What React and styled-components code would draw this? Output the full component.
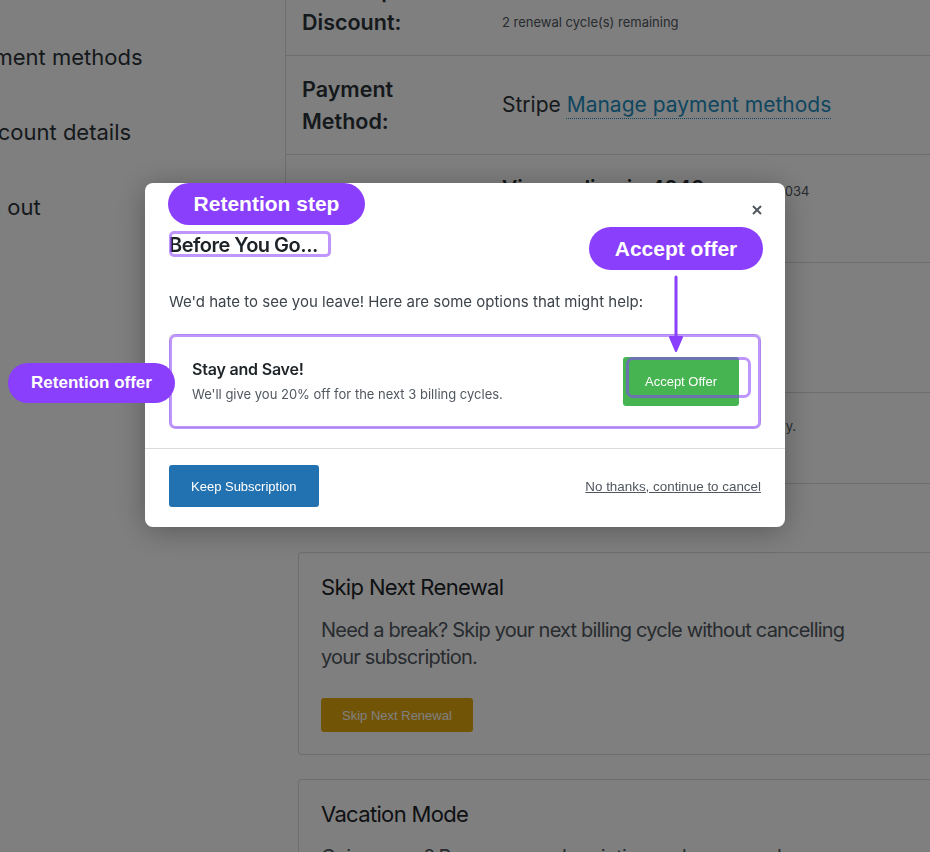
import React from 'react'
import styled, { createGlobalStyle } from 'styled-components'
import { X } from 'lucide-react'

const GlobalStyle = createGlobalStyle`
  html, body {
    margin: 0;
    padding: 0;
  }
  body {
    width: 930px;
    height: 852px;
    overflow: hidden;
    background: #fff;
    font-family: Inter, "Noto Sans", sans-serif;
    color: #2c3338;
  }
  * { box-sizing: border-box; }
`

const App = () => {
  return (
    <>
      <GlobalStyle />
      <Page>
        <Sidebar>
          <NavLink $hidden={45}>Payment methods</NavLink>
          <NavLink $hidden={30}>Account details</NavLink>
          <NavLink $hidden={38}>Log out</NavLink>
        </Sidebar>

        <Main>
          <Details>
            <Row $h={98}>
              <Label>Subscription<br />Discount:</Label>
              <Small $offset={32}>2 renewal cycle(s) remaining</Small>
            </Row>
            <Row $h={99}>
              <Label>Payment<br />Method:</Label>
              <Value>
                Stripe <Link>Manage payment methods</Link>
              </Value>
            </Row>
            <Row $h={108} $top>
              <Label />
              <Value>
                <strong>Visa ending in 4242</strong> <Small>Expires 12/2034</Small>
                <br />
                <Link>Update card</Link>
              </Value>
            </Row>
            <Row $h={130}>
              <Label>Next<br />Payment:</Label>
              <Value>June 12, 2025</Value>
            </Row>
            <Row $h={91}>
              <Label>Renewal:</Label>
              <Small $tight>
                Your next payment will be charged automatically.
                <br />
                Cancel any time.
              </Small>
            </Row>
          </Details>

          <Card>
            <CardTitle>Skip Next Renewal</CardTitle>
            <CardText>Need a break? Skip your next billing cycle without cancelling your subscription.</CardText>
            <SkipButton>Skip Next Renewal</SkipButton>
          </Card>
          <Card $gap={24}>
            <CardTitle>Vacation Mode</CardTitle>
            <CardText>Going away? Pause your subscription and resume when you are back.</CardText>
          </Card>
        </Main>
      </Page>

      <Overlay>
        <Modal>
          <CloseButton aria-label="Close">
            <X size={14} strokeWidth={3.2} />
          </CloseButton>
          <ModalHeader>
            <ModalTitle>Before You Go...</ModalTitle>
          </ModalHeader>
          <ModalBody>
            <Intro>We'd hate to see you leave! Here are some options that might help:</Intro>
            <Offer>
              <div>
                <OfferTitle>Stay and Save!</OfferTitle>
                <OfferText>We'll give you 20% off for the next 3 billing cycles.</OfferText>
              </div>
              <AcceptButton>Accept Offer</AcceptButton>
            </Offer>
          </ModalBody>
          <ModalFooter>
            <KeepButton>Keep Subscription</KeepButton>
            <CancelLink>No thanks, continue to cancel</CancelLink>
          </ModalFooter>
        </Modal>
      </Overlay>

      <Annotations>
        <Ring $x={169} $y={231} $w={162} $h={26} $r={5} />
        <Ring $x={169} $y={334} $w={592} $h={95} $r={7} />
        <Ring $x={626} $y={357} $w={125} $h={41} $r={7} />
        <Arrow width="16" height="82" viewBox="0 0 16 82" $x={668} $y={274}>
          <line x1="8" y1="3" x2="8" y2="66" stroke="#8a3ffc" strokeWidth="3" strokeLinecap="round" />
          <path d="M2 63 L14 63 L8 77 Z" fill="#8a3ffc" stroke="#8a3ffc" strokeWidth="2" strokeLinejoin="round" />
        </Arrow>
        <Pill $x={168} $y={183} $w={197} $h={42} $size={21}>Retention step</Pill>
        <Pill $x={589} $y={227} $w={174} $h={43} $size={21}>Accept offer</Pill>
        <Pill $x={8} $y={363} $w={167} $h={40} $size={17}>Retention offer</Pill>
      </Annotations>
    </>
  )
}

export default App

const Page = styled.div`
  display: flex;
  width: 1240px;
  height: 852px;
`

const Sidebar = styled.nav`
  width: 285px;
  flex-shrink: 0;
  display: flex;
  flex-direction: column;
  gap: 49px;
  padding-top: 44px;
  overflow: hidden;
`

const NavLink = styled.a`
  display: block;
  margin-left: ${p => -p.$hidden}px;
  font-size: 22px;
  line-height: 26px;
  white-space: nowrap;
  color: #2c3338;
`

const Main = styled.main`
  flex: 1;
  display: flex;
  flex-direction: column;
`

const Details = styled.div`
  margin-top: -44px;
  border: 1px solid #dcdcde;
  border-right: none;
`

const Row = styled.div`
  display: grid;
  grid-template-columns: 200px 1fr;
  align-items: ${p => (p.$top ? 'start' : 'center')};
  min-height: ${p => p.$h}px;
  padding: ${p => (p.$top ? '18px 16px 0' : '0 16px')};

  & + & {
    border-top: 1px solid #dcdcde;
  }
`

const Label = styled.div`
  font-size: 21.5px;
  line-height: 32px;
  font-weight: 600;
  color: #2c3338;
`

const Value = styled.div`
  font-size: 21px;
  line-height: 32px;
  color: #2c3338;

  strong {
    font-weight: 600;
  }
`

const Small = styled.span`
  margin-top: ${p => p.$offset || 0}px;
  font-size: 13px;
  line-height: 24px;
  letter-spacing: ${p => (p.$tight ? '-0.15px' : 'normal')};
  color: #50575e;
`

const Link = styled.a`
  color: #1e8cbe;
  text-decoration: underline dotted;
  text-underline-offset: 6px;
  text-decoration-thickness: 1px;
`

const Card = styled.section`
  margin: ${p => p.$gap || 68}px 0 0 13px;
  padding: 22px;
  border: 1px solid #dcdcde;
  border-right: none;
  border-radius: 4px 0 0 4px;
  background: #fff;
`

const CardTitle = styled.h3`
  margin: 0 0 18px;
  font-size: 22px;
  line-height: 24px;
  font-weight: 400;
  letter-spacing: -0.03em;
  color: #1d2327;
`

const CardText = styled.p`
  margin: 0 0 27px;
  max-width: 550px;
  font-size: 20px;
  line-height: 27px;
  letter-spacing: -0.04em;
  color: #50575e;
`

const SkipButton = styled.button`
  height: 34px;
  padding: 0 21px;
  border: none;
  border-radius: 3px;
  background: #e5a90f;
  color: #fff;
  font-family: "Liberation Sans", Arial, sans-serif;
  font-size: 13px;
`

const Overlay = styled.div`
  position: fixed;
  inset: 0;
  display: flex;
  justify-content: center;
  align-items: flex-start;
  padding-top: 183px;
  background: rgba(0, 0, 0, 0.5);
`

const Modal = styled.div`
  position: relative;
  width: 640px;
  background: #fff;
  border-radius: 8px;
  box-shadow: 0 4px 30px rgba(0, 0, 0, 0.3);
`

const CloseButton = styled.button`
  position: absolute;
  top: 20px;
  right: 21px;
  display: flex;
  padding: 0;
  border: none;
  background: none;
  color: #50575e;
`

const ModalHeader = styled.div`
  padding: 50px 24px 0;
`

const ModalTitle = styled.h2`
  margin: 0;
  font-size: 20px;
  line-height: 24px;
  font-weight: 600;
  letter-spacing: -0.5px;
  color: #1d2327;
`

const ModalBody = styled.div`
  padding: 35px 24px 20px;
`

const Intro = styled.p`
  margin: 0 0 22px;
  font-size: 15px;
  line-height: 20px;
  color: #3c434a;
`

const Offer = styled.div`
  display: flex;
  align-items: center;
  justify-content: space-between;
  height: 94px;
  padding: 0 21px 0 22px;
  border: 1px solid #dcdcde;
  border-radius: 4px;
`

const OfferTitle = styled.div`
  margin-bottom: 4px;
  font-size: 16px;
  line-height: 22px;
  font-weight: 600;
  letter-spacing: -0.2px;
  color: #1d2327;
`

const OfferText = styled.div`
  font-size: 13px;
  line-height: 20px;
  color: #50575e;
`

const AcceptButton = styled.button`
  width: 116px;
  height: 49px;
  border: none;
  border-radius: 3px;
  background: #46b450;
  color: #fff;
  font-family: "Liberation Sans", Arial, sans-serif;
  font-size: 13px;
`

const ModalFooter = styled.div`
  display: flex;
  align-items: center;
  justify-content: space-between;
  padding: 16px 24px 20px;
  border-top: 1px solid #dcdcde;
`

const KeepButton = styled.button`
  height: 42px;
  padding: 0 22px;
  border: none;
  border-radius: 3px;
  background: #2271b1;
  color: #fff;
  font-family: "Liberation Sans", Arial, sans-serif;
  font-size: 13px;
`

const CancelLink = styled.a`
  font-family: "Liberation Sans", Arial, sans-serif;
  font-size: 13.4px;
  color: #50575e;
  text-decoration: underline;
`

const Annotations = styled.div`
  position: fixed;
  inset: 0;
  pointer-events: none;
`

const Ring = styled.div`
  position: absolute;
  left: ${p => p.$x}px;
  top: ${p => p.$y}px;
  width: ${p => p.$w}px;
  height: ${p => p.$h}px;
  border: 3px solid rgba(138, 63, 252, 0.55);
  border-radius: ${p => p.$r}px;
`

const Arrow = styled.svg`
  position: absolute;
  left: ${p => p.$x}px;
  top: ${p => p.$y}px;
`

const Pill = styled.div`
  position: absolute;
  left: ${p => p.$x}px;
  top: ${p => p.$y}px;
  width: ${p => p.$w}px;
  height: ${p => p.$h}px;
  display: flex;
  align-items: center;
  justify-content: center;
  border-radius: 999px;
  background: #8a3ffc;
  color: #fff;
  font-family: "Liberation Sans", Arial, sans-serif;
  font-weight: 700;
  font-size: ${p => p.$size}px;
`
